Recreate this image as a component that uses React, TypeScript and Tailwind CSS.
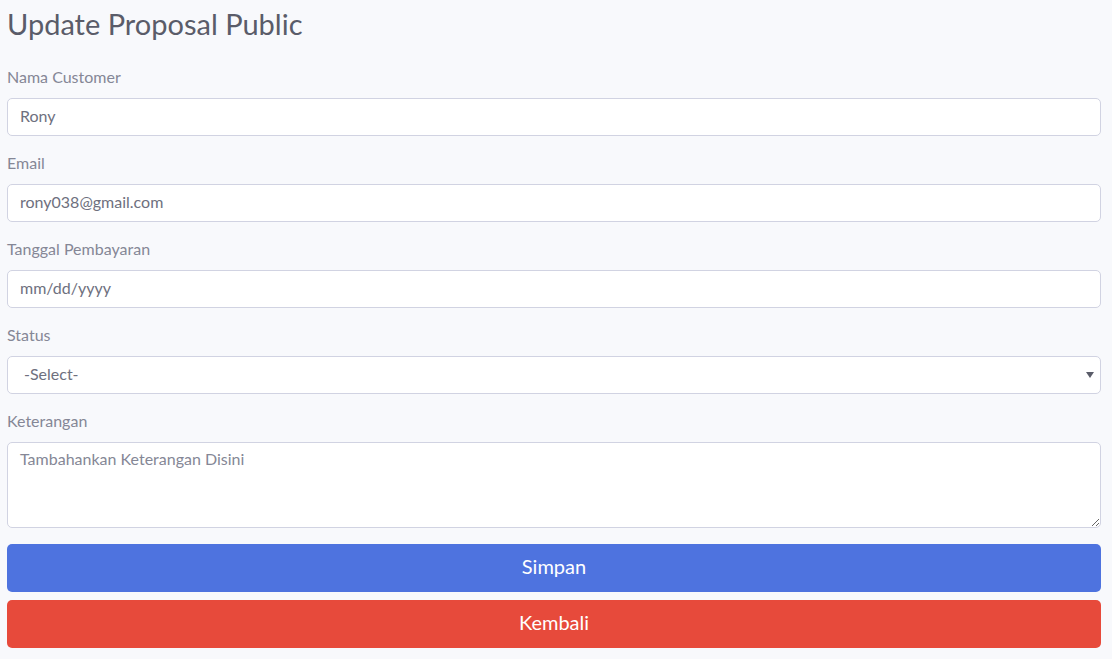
import React from 'react';

const Label: React.FC<{ children: React.ReactNode }> = ({ children }) => (
  <label className="block mb-[10px] leading-[22px] text-[16px] text-[#858796]">{children}</label>
);

const inputCls =
  'block w-full h-[38px] px-3 pb-[3px] rounded-[5px] border border-[#d1d3e2] bg-white text-[16px] text-[#6e707e] outline-none';

export default function App() {
  return (
    <div className="min-h-screen bg-[#f8f9fc] pl-[7px] pr-[11px] pt-[6px] font-['Lato','Noto_Sans',sans-serif]">
      <h3 className="text-[29px] leading-[36px] text-[#5a5c69] mb-[24px]">Update Proposal Public</h3>

      <form className="flex flex-col" onSubmit={e => e.preventDefault()}>
        <div className="mb-4">
          <Label>Nama Customer</Label>
          <input className={inputCls} defaultValue="Rony" />
        </div>
        <div className="mb-4">
          <Label>Email</Label>
          <input className={inputCls} defaultValue="rony038@gmail.com" />
        </div>
        <div className="mb-4">
          <Label>Tanggal Pembayaran</Label>
          <input className={inputCls} defaultValue="mm/dd/yyyy" />
        </div>
        <div className="mb-4">
          <Label>Status</Label>
          <div className="relative">
            <select className={`${inputCls} appearance-none pl-4`} defaultValue="">
              <option value="">-Select-</option>
              <option value="1">Lunas</option>
              <option value="0">Belum Lunas</option>
            </select>
            <svg className="absolute right-[7px] top-[16px]" width="8" height="6" viewBox="0 0 8 6">
              <path d="M0 0h8L4 6z" fill="#5a5c69" />
            </svg>
          </div>
        </div>
        <div className="mb-4">
          <Label>Keterangan</Label>
          <textarea
            rows={3}
            className="block w-full h-[86px] px-3 pt-[4px] pb-[8px] rounded-[5px] border border-[#d1d3e2] bg-white text-[16px] leading-6 text-[#6e707e] placeholder:text-[#858796] outline-none"
            placeholder="Tambahankan Keterangan Disini"
          />
        </div>
        <button className="w-full h-12 pb-1 rounded-[5px] bg-[#4e73df] text-white text-[20px] mb-2">Simpan</button>
        <button type="button" className="w-full h-12 pb-1 rounded-[5px] bg-[#e74a3b] text-white text-[20px]">Kembali</button>
      </form>
    </div>
  );
}
